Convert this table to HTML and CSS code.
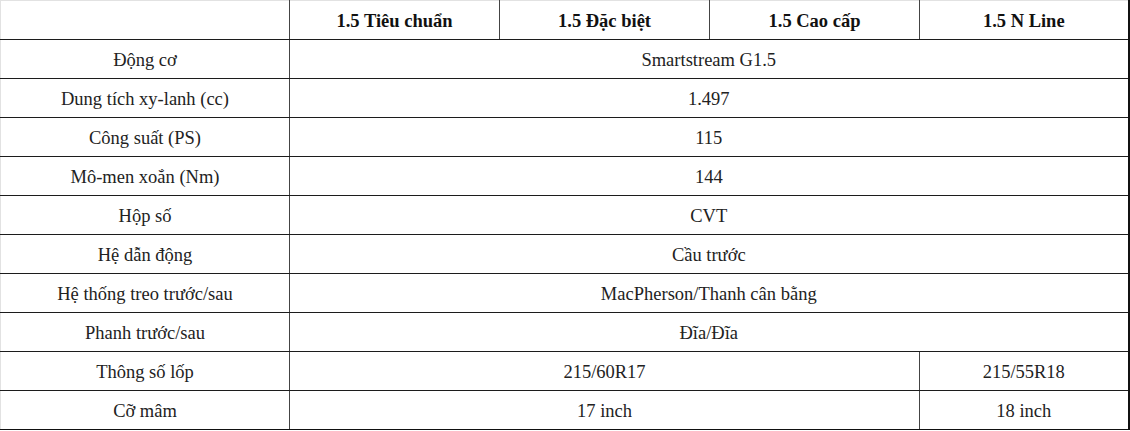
FILE: index.html
```html
<!DOCTYPE html>
<html lang="vi">
<head>
<meta charset="utf-8">
<title>Thông số kỹ thuật</title>
<link rel="stylesheet" href="styles.css">
</head>
<body>
<table class="spec">
  <colgroup>
    <col class="c-label">
    <col class="c-val">
    <col class="c-val">
    <col class="c-val">
    <col class="c-last">
  </colgroup>
  <thead>
    <tr>
      <th></th>
      <th>1.5 Tiêu chuẩn</th>
      <th>1.5 Đặc biệt</th>
      <th>1.5 Cao cấp</th>
      <th>1.5 N Line</th>
    </tr>
  </thead>
  <tbody>
    <tr><td>Động cơ</td><td colspan="4">Smartstream G1.5</td></tr>
    <tr><td>Dung tích xy-lanh (cc)</td><td colspan="4">1.497</td></tr>
    <tr><td>Công suất (PS)</td><td colspan="4">115</td></tr>
    <tr><td>Mô-men xoắn (Nm)</td><td colspan="4">144</td></tr>
    <tr><td>Hộp số</td><td colspan="4">CVT</td></tr>
    <tr><td>Hệ dẫn động</td><td colspan="4">Cầu trước</td></tr>
    <tr><td>Hệ thống treo trước/sau</td><td colspan="4">MacPherson/Thanh cân bằng</td></tr>
    <tr><td>Phanh trước/sau</td><td colspan="4">Đĩa/Đĩa</td></tr>
    <tr><td>Thông số lốp</td><td colspan="3">215/60R17</td><td>215/55R18</td></tr>
    <tr class="last"><td>Cỡ mâm</td><td colspan="3">17 inch</td><td>18 inch</td></tr>
  </tbody>
</table>
</body>
</html>
```

FILE: styles.css
```css
html, body {
  margin: 0;
  padding: 0;
  background: #ffffff;
}

.spec {
  border-collapse: collapse;
  table-layout: fixed;
  width: 1129px;
  font-family: "Liberation Serif", "Times New Roman", serif;
  font-size: 18.5px;
  color: #222222;
}

.c-label { width: 289px; }
.c-val { width: 210px; }
.c-last { width: 209px; }

.spec th,
.spec td {
  height: 37px;
  padding: 1px 0 0 0;
  text-align: center;
  vertical-align: middle;
  border-top: 1px solid #1c1c1c;
  border-bottom: 1px solid #1c1c1c;
  border-left: 1px solid #444444;
  border-right: 1px solid #444444;
  line-height: 20px;
}

.spec th {
  font-weight: bold;
  color: #111111;
  border-top: 1px solid #e2e2e2;
}

.spec tr > :first-child {
  border-left: 1px solid #e2e2e2;
}

.spec tr > :last-child {
  border-right: 2px solid #111111;
}

.spec tr.last td {
  border-bottom: 1px solid #111111;
}
```
